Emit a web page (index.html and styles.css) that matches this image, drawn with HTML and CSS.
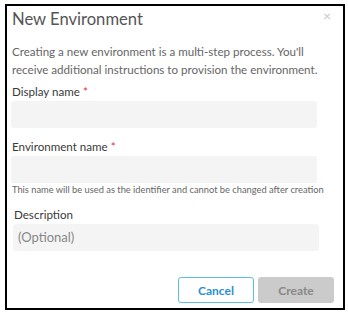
FILE: index.html
```html
<!DOCTYPE html>
<html>
  <head>
    <link rel="stylesheet" href="styles.css">
  </head>
  <body>
  <main class='modal'>
    <header class='modal-header'>
      <h1 class='title'>New Environment</h1>
      <button class='close' type=button>&times;</button>
    </header>
    <section class='modal-body'>
      <p class='intro'>Creating a new environment is a multi-step process. You'll receive additional instructions to provision the environment.</p>

      <label class='label'>Display name <span class='req'>*</span></label>
      <input class='field' type=text>

      <label class='label label-gap'>Environment name <span class='req'>*</span></label>
      <input class='field' type=text>
      <p class='help'>This name will be used as the identifier and cannot be changed after creation</p>

      <div class='desc'>
        <label class='label'>Description</label>
        <textarea class='field field-area' placeholder='(Optional)'></textarea>
      </div>
    </section>
    <footer class='modal-footer'>
      <button class='btn btn-cancel' type=button>Cancel</button>
      <button class='btn btn-create' type=button disabled>Create</button>
    </footer>
  </main>
  </body>
</html>
```

FILE: styles.css
```css
* {
  box-sizing: border-box;
}
body {
  margin: 0;
  font-family: Lato, "Open Sans", sans-serif;
  background-color: #fff;
}
.modal {
  margin: 4px 0 0 5px;
  width: 340px;
  height: 306px;
  border: 2px solid #000;
  display: flex;
  flex-direction: column;
}
.modal-header {
  display: flex;
  justify-content: space-between;
  align-items: flex-start;
  padding: 3px 0 0 5px;
}
.title {
  margin: 0;
  font-size: 16.6px;
  line-height: 20px;
  font-weight: normal;
  color: #555;
}
.close {
  border: none;
  background: transparent;
  padding: 0;
  margin: 0 12px 0 0;
  font-family: Lato, sans-serif;
  font-size: 14px;
  line-height: 14px;
  color: #c8c8c8;
  cursor: pointer;
}
.modal-body {
  padding: 0 4px;
  display: flex;
  flex-direction: column;
}
.intro {
  margin: 14px 0 4px 1px;
  font-size: 11.6px;
  line-height: 18px;
  color: #666;
}
.label {
  display: block;
  font-size: 11.6px;
  line-height: 18px;
  color: #3a3a3a;
  padding-left: 1px;
}
.label-gap {
  margin-top: 10px;
}
.req {
  color: #e0313b;
}
.field {
  display: block;
  width: 306px;
  height: 27px;
  border: none;
  border-radius: 3px;
  background-color: #f4f4f4;
  font-family: Lato, sans-serif;
  font-size: 13px;
}
.field-area {
  resize: none;
  padding: 6px 5px;
  line-height: 15px;
}
.field-area::placeholder {
  color: #888;
}
.help {
  margin: 2px 0 0 1px;
  font-size: 9.3px;
  line-height: 10px;
  color: #666;
  white-space: nowrap;
}
.desc {
  margin: 11px 0 0 2px;
}
.modal-footer {
  margin-top: auto;
  padding: 0 9px 5px 0;
  display: flex;
  justify-content: flex-end;
  gap: 4px;
}
.btn {
  width: 76px;
  height: 26px;
  border-radius: 3px;
  font-family: Lato, sans-serif;
  font-size: 12px;
  font-weight: bold;
  cursor: pointer;
}
.btn-cancel {
  border: 1px solid #5bbfe5;
  background-color: #fff;
  color: #2b8fcf;
}
.btn-create {
  border: none;
  background-color: #cbcbcb;
  color: #888;
}
```
